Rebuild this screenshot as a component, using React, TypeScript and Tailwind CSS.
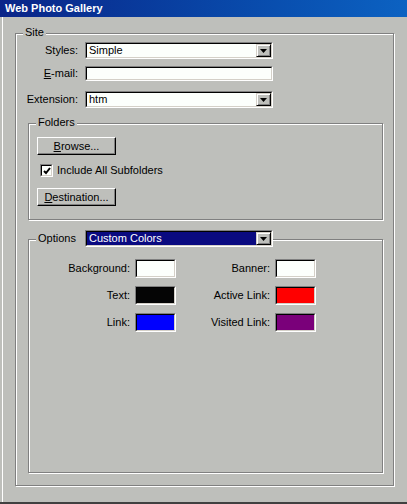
import React from 'react';

const face = 'bg-[#bebfbb]';

function Sunken({ className = '', inner = 'bg-[#fcfffc]', children }: { className?: string; inner?: string; children?: React.ReactNode }) {
  return (
    <div className={`border border-t-[#808080] border-l-[#808080] border-b-white border-r-white ${className}`}>
      <div className={`h-full w-full border border-t-black border-l-black border-b-[#d4d0c8] border-r-[#d4d0c8] ${inner}`}>
        {children}
      </div>
    </div>
  );
}

function Arrow() {
  return (
    <svg width="7" height="4" viewBox="0 0 7 4" className="block">
      <polygon points="0,0 7,0 3.5,4" fill="#000" />
    </svg>
  );
}

function Select({ value, highlight = false }: { value: string; highlight?: boolean }) {
  return (
    <Sunken className="h-[17px] w-[188px]">
      <div className="flex h-full items-stretch">
        <div className={`flex flex-1 items-center pl-[2px] ${highlight ? 'bg-[#0a0a80] text-white' : 'text-black'}`}>
          {value}
        </div>
        <div className={`flex w-[15px] items-center justify-center border border-t-[#d4d0c8] border-l-[#d4d0c8] border-b-black border-r-black ${face} shadow-[inset_1px_1px_0_#fff,inset_-1px_-1px_0_#808080]`}>
          <Arrow />
        </div>
      </div>
    </Sunken>
  );
}

function Button({ children }: { children: React.ReactNode }) {
  return (
    <div className={`flex h-[18px] w-[79px] items-center justify-center border border-t-white border-l-white border-b-black border-r-black ${face} shadow-[inset_-1px_-1px_0_#808080]`}>
      {children}
    </div>
  );
}

function Group({ label, labelPos = 'left-[7px] top-[-8px]', className = '', children }: { label: React.ReactNode; labelPos?: string; className?: string; children?: React.ReactNode }) {
  return (
    <div className={`relative border border-[#808080] shadow-[inset_1px_1px_0_#fff,1px_1px_0_#fff] ${className}`}>
      <div className={`absolute flex items-center ${labelPos}`}>{label}</div>
      {children}
    </div>
  );
}

function Swatch({ color }: { color: string }) {
  return <Sunken className="h-[19px] w-[41px]" inner={color} />;
}

export default function App() {
  const rows: [string, string, string, string][] = [
    ['Background:', 'bg-[#fcfffc]', 'Banner:', 'bg-[#fcfffc]'],
    ['Text:', 'bg-[#050505]', 'Active Link:', 'bg-[#ff0000]'],
    ['Link:', 'bg-[#0000ff]', 'Visited Link:', 'bg-[#7a007a]'],
  ];

  return (
    <div
      className={`flex h-[504px] w-[407px] flex-col overflow-hidden border-b-2 border-[#404040] ${face} text-[11px] leading-[13px] text-black`}
      style={{ fontFamily: '"Liberation Sans", Arial, sans-serif' }}
    >
      <div className="flex h-[17px] items-center bg-gradient-to-r from-[#0a2488] to-[#0c62c2] pl-[5px] text-[11px] font-bold text-white">
        Web Photo Gallery
      </div>
      <div className="ml-[2px] flex-1 border-l border-white pl-[12px] pt-[16px]">
        <Group
          className="h-[453px] w-[379px]"
          label={<span className={`${face} px-[2px]`}>Site</span>}
        >
          <div className="flex flex-col pt-[8px]">
            <div className="flex h-[17px] items-center">
              <span className="w-[69px] pr-[7px] text-right">Styles:</span>
              <Select value="Simple" />
            </div>
            <div className="mt-[7px] flex h-[15px] items-center">
              <span className="w-[69px] pr-[7px] text-right">
                <span className="underline">E</span>-mail:
              </span>
              <Sunken className="h-[15px] w-[188px]" />
            </div>
            <div className="mt-[10px] flex h-[17px] items-center">
              <span className="w-[69px] pr-[7px] text-right">Extension:</span>
              <Select value="htm" />
            </div>

            <Group
              className="ml-[12px] mt-[15px] h-[97px] w-[355px]"
              label={<span className={`${face} px-[2px]`}>Folders</span>}
            >
              <div className="flex flex-col pl-[8px] pt-[13px]">
                <Button>
                  <span>
                    <span className="underline">B</span>rowse...
                  </span>
                </Button>
                <div className="mt-[9px] flex h-[13px] items-center pl-[3px]">
                  <Sunken className="h-[13px] w-[13px]">
                    <svg width="11" height="11" viewBox="0 0 11 11" className="block">
                      <polyline points="2,5 4,7 8,2" fill="none" stroke="#000" strokeWidth="2" />
                    </svg>
                  </Sunken>
                  <span className="ml-[4px]">Include All Subfolders</span>
                </div>
                <div className="mt-[11px]">
                  <Button>
                    <span>
                      <span className="underline">D</span>estination...
                    </span>
                  </Button>
                </div>
              </div>
            </Group>

            <Group
              className="ml-[12px] mt-[19px] h-[234px] w-[355px]"
              labelPos="left-[7px] top-[-10px]"
              label={
                <div className={`flex items-center ${face}`}>
                  <span className="w-[49px] px-[2px]">Options</span>
                  <Select value="Custom Colors" highlight />
                </div>
              }
            >
              <div className="flex flex-col gap-[8px] pt-[19px]">
                {rows.map(([l1, c1, l2, c2]) => (
                  <div key={l1} className="flex h-[19px] items-center">
                    <span className="w-[106px] pr-[5px] text-right">{l1}</span>
                    <Swatch color={c1} />
                    <span className="w-[99px] pr-[5px] text-right">{l2}</span>
                    <Swatch color={c2} />
                  </div>
                ))}
              </div>
            </Group>
          </div>
        </Group>
      </div>
    </div>
  );
}
